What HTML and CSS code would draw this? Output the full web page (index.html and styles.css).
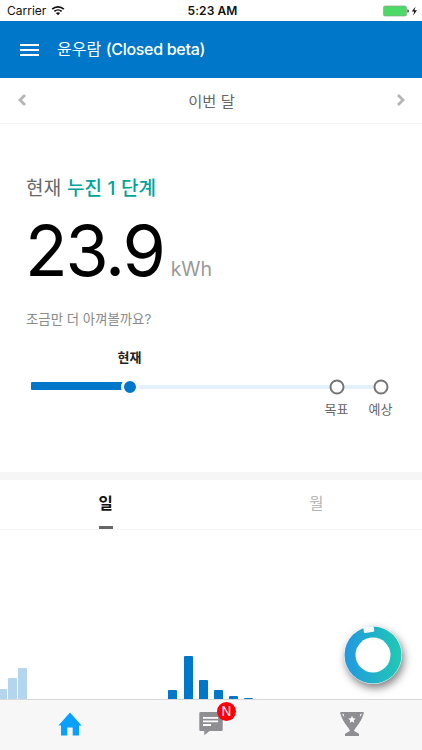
FILE: index.html
```html
<!DOCTYPE html>
<html lang="ko">
<head>
    <meta charset="UTF-8">
    <meta name="viewport" content="width=device-width, initial-scale=1.0">
    <title>이번 달</title>
    <link rel="stylesheet" href="styles.css">
</head>
<body>
    <div class="app">
        <div class="status-bar">
            <div class="carrier">
                <span>Carrier</span>
                <svg width="14" height="11" viewBox="0 0 14 11">
                    <path d="M1.2 4.1C4.4 1 9.6 1 12.8 4.1M3.4 6.4c2-1.9 5.2-1.9 7.2 0" fill="none" stroke="#111" stroke-width="1.7"/>
                    <path d="M4.9 8q2.1-1.7 4.2 0L7 10.2z" fill="#111"/>
                </svg>
            </div>
            <div class="clock">5:23 AM</div>
            <div class="battery">
                <svg width="35" height="12" viewBox="0 0 35 12">
                    <rect x="0.5" y="1" width="23" height="10" rx="1.5" fill="#4cd964" stroke="#8da790" stroke-width="0.7"/>
                    <path d="M24.4 4.3q1.5 0 1.5 1.7t-1.5 1.7z" fill="#333"/>
                    <path d="M32.5 1.5L28.8 6.6h2.5L30 10.8l4-5.5h-2.6z" fill="#111"/>
                </svg>
            </div>
        </div>

        <header class="header">
            <svg width="19" height="14" viewBox="0 0 19 14">
                <path d="M0 2h19M0 7h19M0 12h19" stroke="#fff" stroke-width="2"/>
            </svg>
            <h1>윤우람 <span>(Closed beta)</span></h1>
        </header>

        <nav class="month-nav">
            <svg width="10" height="14" viewBox="0 0 10 14"><path d="M8 2L3 7l5 5" fill="none" stroke="#b5b5b5" stroke-width="2.8"/></svg>
            <span>이번 달</span>
            <svg width="10" height="14" viewBox="0 0 10 14"><path d="M2 2l5 5-5 5" fill="none" stroke="#b5b5b5" stroke-width="2.8"/></svg>
        </nav>

        <section class="summary">
            <p class="level">현재 <strong>누진 1 단계</strong></p>
            <p class="usage"><span class="value">23.9</span><span class="unit">kWh</span></p>
            <p class="message">조금만 더 아껴볼까요?</p>
            <div class="progress">
                <div class="track"></div>
                <div class="track-fill"></div>
                <div class="point point-now"><span>현재</span></div>
                <div class="point point-goal"><span>목표</span></div>
                <div class="point point-expect"><span>예상</span></div>
            </div>
        </section>

        <div class="tabs">
            <div class="tab active"><span>일</span></div>
            <div class="tab"><span>월</span></div>
        </div>

        <div class="chart">
            <div class="bars bars-prev">
                <div class="bar" style="height: 10px"></div>
                <div class="bar" style="height: 21px"></div>
                <div class="bar" style="height: 31px"></div>
            </div>
            <div class="bars bars-now">
                <div class="bar" style="height: 9px"></div>
                <div class="bar" style="height: 43px"></div>
                <div class="bar" style="height: 19px"></div>
                <div class="bar" style="height: 9px"></div>
                <div class="bar" style="height: 3px"></div>
                <div class="bar" style="height: 1px"></div>
            </div>
        </div>

        <nav class="bottom-nav">
            <div class="nav-item">
                <svg width="24" height="24" viewBox="0 0 24 24">
                    <path d="M12 0.5L23.6 13.5H21v10h-6.3v-8H9.3v8H3v-10H0.4z" fill="#0aa0ff"/>
                </svg>
            </div>
            <div class="nav-item">
                <div class="talk">
                    <svg width="24" height="24" viewBox="0 0 24 24">
                        <path d="M1.5 0h21q1.2 0 1.2 1.2v16.6q0 1.2-1.2 1.2H10.5l-5.2 4.3V19H1.5Q.3 19 .3 17.8V1.2Q.3 0 1.5 0z" fill="#8e8e93"/>
                        <path d="M4 5.8h15M4 9.4h15M4 13h8" stroke="#fff" stroke-width="1.8"/>
                    </svg>
                    <span class="badge">N</span>
                </div>
            </div>
            <div class="nav-item">
                <svg width="24" height="24" viewBox="0 0 24 24">
                    <path d="M.3 0h23.4v1.6C22 7.500 19.500 11 16 15.500c-1 1.300-1.800 2.200-1.800 3.500l4.800 2.700V24H5v-2.300L9.800 19c0-1.300-.8-2.200-1.800-3.500C4.500 11 2 7.500.3 1.600z" fill="#8e8e93"/>
                    <path d="M2.200 1.800h1.400l.7 3C3.200 4.200 2.500 3.200 2.200 1.800zM21.800 1.800h-1.400l-.7 3c1.100-.6 1.800-1.600 2.100-3z" fill="#f7f7f7"/>
                    <path d="M12 3.800l1.100 2.400 2.600.3-1.900 1.800.5 2.600-2.300-1.300-2.300 1.300.5-2.600-1.900-1.800 2.600-.3z" fill="#fff"/>
                </svg>
            </div>
        </nav>

        <div class="live-button">
            <svg width="58" height="58" viewBox="0 0 58 58">
                <defs>
                    <linearGradient id="ring" x1="0" y1="0" x2="1" y2="0">
                        <stop offset="0" stop-color="#2298e0"/>
                        <stop offset="1" stop-color="#20c9b4"/>
                    </linearGradient>
                </defs>
                <circle cx="29" cy="29" r="28.5" fill="url(#ring)"/>
                <circle cx="29" cy="29" r="17.5" fill="#fff"/>
                <rect x="19.5" y="0.8" width="10.5" height="5.5" rx="1.2" fill="#fff" transform="rotate(-9 25 3)"/>
            </svg>
        </div>
    </div>
</body>
</html>
```
FILE: styles.css
```css
body {
    font-family: Inter, "Noto Sans CJK KR", sans-serif;
    background-color: #fff;
    margin: 0;
    color: #666;
}

h1, p {
    margin: 0;
    font-weight: 400;
}

svg {
    display: block;
    flex: none;
}

.app {
    position: relative;
    display: flex;
    flex-direction: column;
    height: 750px;
    overflow: hidden;
}

.status-bar {
    display: grid;
    grid-template-columns: 1fr auto 1fr;
    align-items: center;
    height: 21px;
    padding: 0 4px 0 7px;
    box-sizing: border-box;
    font-size: 12px;
    color: #111;
}

.carrier {
    display: flex;
    align-items: center;
    gap: 5px;
}

.clock {
    font-weight: 600;
    font-size: 12px;
    letter-spacing: 0.1px;
}

.battery {
    justify-self: end;
}

.header {
    display: flex;
    align-items: center;
    gap: 18px;
    height: 57px;
    padding-left: 20px;
    background-color: #0077c8;
    color: #fff;
}

.header h1 {
    font-size: 16px;
    line-height: 24px;
    padding-bottom: 1px;
}

.header h1 span {
    font-weight: 500;
    letter-spacing: -0.3px;
}

.month-nav {
    display: flex;
    align-items: center;
    justify-content: space-between;
    height: 46px;
    padding: 0 16px 2px 17px;
    box-sizing: border-box;
    border-bottom: 1px solid #f5f5f5;
    font-size: 15.3px;
}

.summary {
    height: 348px;
    padding: 51px 26px 0;
    box-sizing: border-box;
}

.level {
    font-size: 19px;
    line-height: 28px;
    letter-spacing: 0.2px;
}

.level strong {
    font-weight: 500;
    color: #00a499;
}

.usage {
    display: flex;
    align-items: baseline;
    gap: 8px;
    height: 84px;
    margin: 6px 0 0 -1px;
    line-height: 84px;
}

.value {
    font-size: 70px;
    letter-spacing: -2.2px;
    color: #000;
}

.unit {
    margin-left: -1px;
    font-size: 19.5px;
    color: #999;
}

.message {
    margin-top: 16px;
    font-size: 13.4px;
    line-height: 20px;
    color: #8a8a8a;
}

.progress {
    position: relative;
    height: 20px;
    margin: 48px 0 0 5px;
}

.track {
    position: absolute;
    top: 8px;
    left: 0;
    width: 350px;
    height: 4px;
    background-color: #e3f1fd;
}

.track-fill {
    position: absolute;
    top: 5px;
    left: 0;
    width: 92px;
    height: 8px;
    border-radius: 1px;
    background-color: #0077c8;
}

/* points sit centred on the track */
.point {
    position: absolute;
    top: 10px;
    width: 15px;
    height: 15px;
    box-sizing: border-box;
    border: 2px solid #757575;
    border-radius: 50%;
    background-color: #fff;
    transform: translate(-50%, -50%);
}

.point span {
    position: absolute;
    top: 17px;
    left: 50%;
    transform: translateX(-50%);
    font-size: 13px;
    line-height: 20px;
    white-space: nowrap;
}

.point-now {
    left: 98.5px;
    width: 18px;
    height: 18px;
    border: 3px solid #fff;
    background-color: #0077c8;
}

.point-now span {
    top: -34px;
    font-weight: 600;
    color: #222;
}

.point-goal {
    left: 305.5px;
}

.point-expect {
    left: 349.5px;
}

.tabs {
    display: flex;
    height: 58px;
    box-sizing: border-box;
    border-top: 8px solid #f6f6f6;
    border-bottom: 1px solid #f5f5f5;
}

.tab {
    flex: 1;
    display: flex;
    justify-content: center;
    font-size: 15.5px;
    line-height: 47px;
    color: #b5b5b5;
}

.tab.active span {
    width: 14px;
    height: 49px;
    display: flex;
    justify-content: center;
    box-sizing: border-box;
    border-bottom: 3px solid #666;
    font-weight: 700;
    color: #111;
}

.chart {
    flex: 1;
    display: flex;
    align-items: flex-end;
}

.bars {
    display: flex;
    align-items: flex-end;
}

.bar {
    width: 9px;
    border-radius: 1px 1px 0 0;
}

.bars-prev {
    gap: 1px;
    margin-left: -2px;
}

.bars-prev .bar {
    background-color: #b3d6ee;
}

.bars-now {
    gap: 6.2px;
    margin-left: 141.4px;
}

.bars-now .bar {
    background-color: #0077c8;
}

.bottom-nav {
    display: flex;
    height: 51px;
    box-sizing: border-box;
    border-top: 1px solid #d8d8da;
    background-color: #f7f7f7;
}

.nav-item {
    flex: 1;
    display: flex;
    justify-content: center;
    padding-top: 12px;
}

.talk {
    position: relative;
    height: 24px;
}

.badge {
    position: absolute;
    top: -10px;
    left: 18px;
    width: 19px;
    height: 19px;
    border-radius: 50%;
    background-color: #fb0007;
    color: #fff;
    font-size: 13px;
    line-height: 19px;
    text-align: center;
}

.live-button {
    position: absolute;
    top: 626px;
    left: 344px;
    width: 58px;
    height: 58px;
    border-radius: 50%;
    box-shadow: 2px 4px 9px rgba(0, 0, 0, 0.5);
}
```
